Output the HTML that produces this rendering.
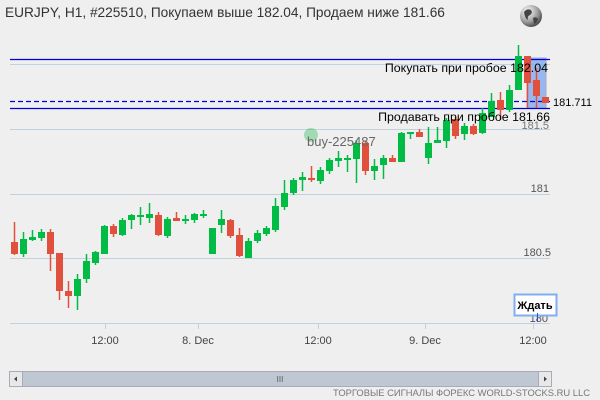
<!DOCTYPE html>
<html><head><meta charset="utf-8"><style>
html,body{margin:0;padding:0;background:#efefef;width:600px;height:400px;overflow:hidden;font-family:"Liberation Sans","DejaVu Sans",sans-serif}
</style></head><body>
<svg width="600" height="400" xmlns="http://www.w3.org/2000/svg" style="position:absolute;left:0;top:0">
<rect width="600" height="400" fill="#efefef"/>
<text x="5" y="17" font-size="13.7" fill="#333" font-family="Liberation Sans, DejaVu Sans, sans-serif">EURJPY, H1, #225510, Покупаем выше 182.04, Продаем ниже 181.66</text>
<defs><radialGradient id="g" cx="0.35" cy="0.3" r="0.8"><stop offset="0" stop-color="#fff"/><stop offset="0.6" stop-color="#999"/><stop offset="1" stop-color="#333"/></radialGradient></defs>
<circle cx="531" cy="16" r="11" fill="url(#g)"/>
<path d="M524 12 q3 -4 7 -2 q2 3 -1 5 q-3 1 -2 5 q-3 -1 -4 -8z M533 18 q3 -2 5 1 q-1 4 -4 5z" fill="#444"/>
<g stroke="#c3d0de" stroke-width="1">
<line x1="10" y1="64.5" x2="550" y2="64.5"/>
<line x1="10" y1="129.5" x2="550" y2="129.5"/>
<line x1="10" y1="194.5" x2="550" y2="194.5"/>
<line x1="10" y1="258.5" x2="550" y2="258.5"/>
<line x1="10" y1="323.5" x2="550" y2="323.5"/>
<line x1="105.5" y1="323" x2="105.5" y2="329"/>
<line x1="198.5" y1="323" x2="198.5" y2="329"/>
<line x1="318.5" y1="323" x2="318.5" y2="329"/>
<line x1="425.5" y1="323" x2="425.5" y2="329"/>
<line x1="533.5" y1="323" x2="533.5" y2="329"/>
</g>
<rect x="527" y="58" width="19" height="50" fill="#7aa6ee" fill-opacity="0.75" stroke="#aab" stroke-width="1"/>
<line x1="10" y1="59.5" x2="550" y2="59.5" stroke="#0000dd" stroke-width="1.3"/>
<line x1="10" y1="108.5" x2="550" y2="108.5" stroke="#0000dd" stroke-width="1.3"/>
<line x1="10" y1="101.5" x2="550" y2="101.5" stroke="#0000dd" stroke-width="1.2" stroke-dasharray="5,3"/>
<g id="c"></g>
<text x="548" y="72" font-size="12.4" text-anchor="end" fill="#000">Покупать при пробое 182.04</text>
<text x="550" y="121" font-size="12.4" text-anchor="end" fill="#000">Продавать при пробое 181.66</text>
<text x="549" y="129" font-size="11" text-anchor="end" fill="#777">181.5</text>
<text x="549" y="192" font-size="11" text-anchor="end" fill="#555">181</text>
<text x="551" y="256" font-size="11" text-anchor="end" fill="#555">180.5</text>
<text x="548" y="322" font-size="11" text-anchor="end" fill="#555">180</text>
<text x="553" y="106" font-size="11" fill="#000">181.711</text>
<circle cx="311" cy="135" r="7" fill="#2fbf5a" fill-opacity="0.4"/>
<text x="307" y="146" font-size="13" fill="#666">buy-225487</text>
<g font-size="11" fill="#444" text-anchor="middle">
<text x="105" y="344">12:00</text><text x="198" y="344">8. Dec</text><text x="318" y="344">12:00</text><text x="425" y="344">9. Dec</text><text x="533" y="344">12:00</text>
</g>
<rect x="514.5" y="294.5" width="42" height="21" fill="#fff" stroke="#80aef0" stroke-width="2"/>
<text x="535" y="309" font-size="11" font-weight="bold" text-anchor="middle" fill="#000">Ждать</text>
<line x1="537.5" y1="313" x2="537.5" y2="322" stroke="#2255dd"/>
<rect x="9.5" y="371.5" width="542" height="15" fill="#bfc8d2" stroke="#aab" />
<rect x="9.5" y="371.5" width="13" height="15" fill="#e8e8e8" stroke="#aab"/>
<rect x="538.5" y="371.5" width="13" height="15" fill="#e8e8e8" stroke="#aab"/>
<path d="M14 379 l3 -2.5 v5z" fill="#444"/><path d="M547 379 l-3 -2.5 v5z" fill="#444"/>
<text x="280" y="382" font-size="8" text-anchor="middle" fill="#555">III</text>
<text x="590" y="396" font-size="9.4" text-anchor="end" fill="#777">ТОРГОВЫЕ СИГНАЛЫ ФОРЕКС WORLD-STOCKS.RU LLC</text>
</svg>
<script>
var d=[
['R',242,254,222,255],['G',239,254,232,257],['G',237,240,230,241],['G',232,238,229,241],['R',232,254,229,271],
['R',253,291,253,300],['R',291,296,281,308],['G',279,296,274,310],['G',261,279,254,283],['G',252,263,251,265],
['G',226,254,225,254],['R',226,234,224,237],['G',220,235,218,236],['G',215,220,214,229],['G',215,217,207,225],
['G',214,218,203,223],['R',215,235,212,236],['G',219,236,217,238],['R',218,221,212,221],['G',219,221,215,224],
['G',214,220,213,223],['G',214,216,210,218],['G',228,254,228,254],['G',219,225,210,233],['R',220,236,219,238],
['R',235,256,228,257],['G',241,258,238,258],['G',233,241,230,243],['G',228,234,226,236],['G',206,230,198,232],
['G',193,207,180,210],['G',180,193,178,195],['G',177,180,172,191],['R',178,180,166,182],['G',170,181,167,184],
['G',160,171,158,174],['G',158,161,151,167],['G',158,159,155,172],['G',143,159,140,183],['R',143,171,141,175],
['G',166,171,159,180],['G',158,165,155,179],['R',158,162,155,162],['G',133,162,132,162],['G',132,134,132,139],
['R',132,137,129,137],['G',143,158,127,164],['G',140,143,127,143],['G',120,141,118,148],['R',119,136,117,139],
['G',126,134,123,140],['R',126,134,124,135],['G',113,133,108,134],['G',101,117,93,117],['R',100,110,92,120],
['G',90,110,85,112],['G',56,90,45,90],['R',56,83,56,108],['R',80,96,68,108],['R',97,103,97,103]];
var s='';d.forEach(function(c,k){var x=11+9*k,col=c[0]=='G'?'#00bb44':'#e0503c';
s+='<line x1="'+(x+3.5)+'" y1="'+c[3]+'" x2="'+(x+3.5)+'" y2="'+c[4]+'" stroke="'+col+'" stroke-width="1.5"/>';
s+='<rect x="'+x+'" y="'+c[1]+'" width="7" height="'+Math.max(2,c[2]-c[1])+'" fill="'+col+'"/>';});
document.getElementById('c').innerHTML=s;
</script>
</body></html>
